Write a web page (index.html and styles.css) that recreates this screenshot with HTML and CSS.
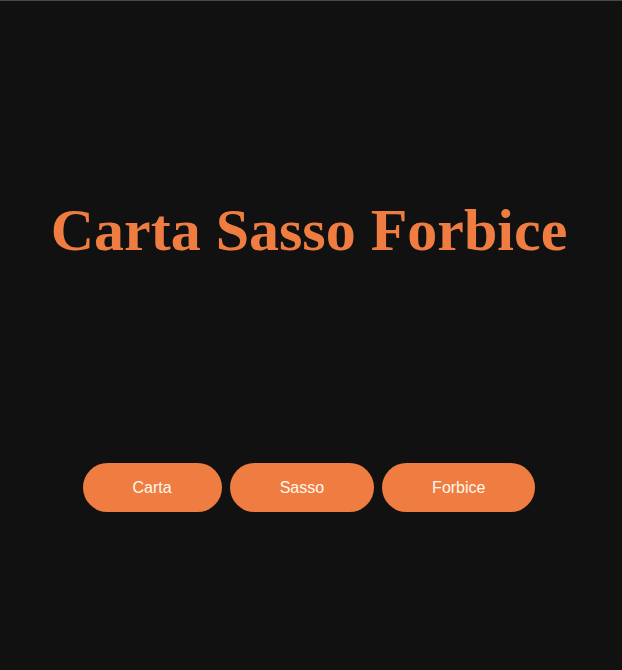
FILE: index.html
```html
<!DOCTYPE html>
<html lang="it">
<head>
<meta charset="utf-8">
<title>Carta Sasso Forbice</title>
<link rel="stylesheet" href="styles.css">
</head>
<body>
<main class="game">
  <h1 class="title">Carta Sasso Forbice</h1>
  <div class="choices">
    <button class="choice">Carta</button>
    <button class="choice">Sasso</button>
    <button class="choice">Forbice</button>
  </div>
</main>
</body>
</html>
```
FILE: styles.css
```css
html, body {
  margin: 0;
  padding: 0;
  background: #111111;
  height: 100%;
}
body {
  border-top: 1px solid #4a4a4a;
  box-sizing: border-box;
}
.game {
  display: flex;
  flex-direction: column;
  align-items: center;
  padding-right: 4px;
}
.title {
  margin: 195px 0 0 0;
  font-family: "Liberation Serif", "Times New Roman", serif;
  font-weight: bold;
  font-size: 60px;
  line-height: normal;
  color: #ef7d41;
}
.choices {
  display: flex;
  gap: 8px;
  margin-top: 198px;
}
.choice {
  font-family: "Liberation Sans", Arial, sans-serif;
  font-size: 16px;
  color: #fff8ee;
  background: #ef7d41;
  border: none;
  border-radius: 25px;
  height: 49px;
  padding: 0 50px;
  cursor: pointer;
}
```
